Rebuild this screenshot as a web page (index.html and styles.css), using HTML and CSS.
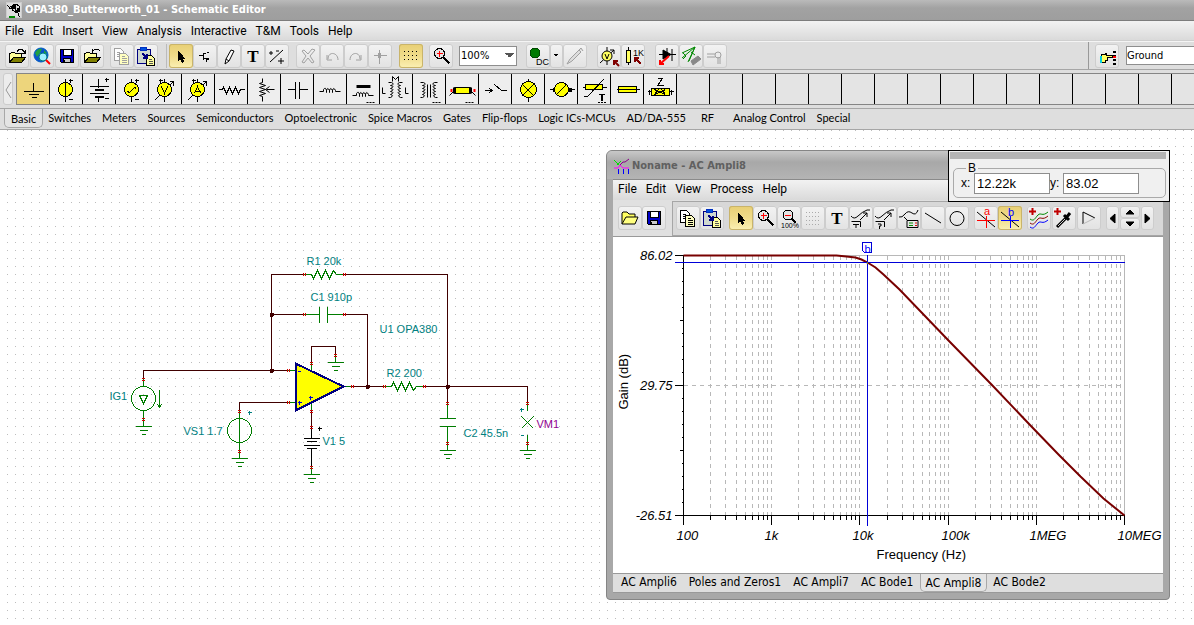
FILE: index.html
```html
<!DOCTYPE html>
<html lang="en">
<head>
<meta charset="utf-8">
<title>OPA380_Butterworth_01 - Schematic Editor</title>
<link rel="stylesheet" href="styles.css">
</head>
<body>
<svg class="defs" aria-hidden="true">
  <symbol id="folder" viewBox="-.5 -.5 24 24">
    <path d="M4 18V9h1l1-1h3l1 1h6v4" fill="#ffff99"/><path d="M4 18l4-5h12l-4 5z" fill="#808000"/>
  </symbol>
  <symbol id="floppy" viewBox="-.5 -.5 24 24">
    <path d="M5 5h13v13H6l-1-1z" fill="#0000c8"/><path d="M8 5h8v6H8z" fill="#fff"/><path d="M8 14h7v4H8z" fill="#ccc"/><path d="M9 15v2"/>
  </symbol>
  <symbol id="copy" viewBox="-.5 -.5 24 24">
    <path d="M4 4h6l3 3v9H4zM6 8h3M6 10h3M6 12h3" fill="#fff"/><path d="M9 9h6l3 3v8H9z" class="sheet"/><path d="M11 12h3M11 14h5M11 16h5M11 18h5"/>
  </symbol>
  <symbol id="paste" viewBox="-.5 -.5 24 24">
    <path d="M3 5h13v14H3z" fill="#cfd8cf" stroke="#000080"/><path d="M6 3h6v3H6z" fill="#0050e0" stroke="#0030c0"/><path d="M12 11h5l3 3v7h-8z" fill="#ffffa0"/><path d="M14 15h3M14 17h4M14 19h4" stroke="#555"/><path d="M8 9l4 4m0-4v4H8" stroke="#000080" stroke-width="2"/>
  </symbol>
  <symbol id="pointer" viewBox="-.5 -.5 24 24"><path d="M9 7v9l2-2 2 4 1-1-1-3h2z" fill="#000"/></symbol>
  <symbol id="zoomin" viewBox="-.5 -.5 24 24"><circle cx="10" cy="9" r="5" fill="#e4e4e4"/><path d="M14 13l6 6" stroke-width="2"/><path d="M7 9h6M10 6v6" stroke="#f00"/></symbol>
  <symbol id="gnd" viewBox="0 0 16 8" overflow="visible"><path d="M0 0h16M4 4h8M6 8h4"/></symbol>
  <symbol id="decade" viewBox="0 0 88 260" overflow="visible"><path d="M27 0v260M42 0v260M53 0v260M62 0v260M69 0v260M75 0v260M80 0v260M84 0v260M88 0v260"/></symbol>
  <symbol id="ticks" viewBox="0 0 88 10" overflow="visible"><path d="M27 0v4M42 0v4M53 0v4M62 0v4M69 0v4M75 0v4M80 0v4M84 0v4M88 0v9"/></symbol>
</svg>

<header class="titlebar">
  <svg class="icon appicon" viewBox="-.5 -.5 17 17" width="17" height="17"><path d="M0 0h15v15H0z" fill="#ddd" stroke="#ccc"/><path d="M1 3l3 3M2 6h3M6 2h5M4 4l6-2 3 2v5l-4 1-3-3zM6 4v4M9 3v6M12 10v3l2 2"/><path d="M6 3h3v3H7zM11 6h2v3h-3z" fill="#000"/><path d="M2 14h6" stroke="#080" stroke-width="2"/></svg>
  <h1>OPA380_Butterworth_01 - Schematic Editor</h1>
</header>
<nav class="menubar" aria-label="Main menu">
  <button>File</button><button>Edit</button><button>Insert</button><button>View</button><button>Analysis</button><button>Interactive</button><button>T&amp;M</button><button>Tools</button><button>Help</button>
</nav>

<div class="toolbar">
  <div class="group spaced">
    <button class="tool" aria-label="Open"><svg class="icon"><use href="#folder"/><path d="M12 7l2-2h3l3 3m0-3v4h-4" transform="translate(0 .5)"/></svg></button>
    <button class="tool" aria-label="Open from web"><svg class="icon smooth" viewBox="0 0 24 24"><circle cx="11" cy="11" r="7" fill="#0a50d0" stroke="#0060c0"/><path d="M5 9q3-5 7-4l-2 4-3 4zM14 6l3 3-3 2zM8 15l4-2 2 4z" fill="#20a040" stroke="none"/><circle cx="13" cy="13" r="4" fill="#a0f0ff" stroke="#008080"/><path d="M16 16l4 4" stroke="#f00" stroke-width="2"/></svg></button>
    <button class="tool" aria-label="Save"><svg class="icon"><use href="#floppy"/></svg></button>
    <button class="tool" aria-label="Close"><svg class="icon"><use href="#folder"/><path d="M12 5v4h4M12 8l3-3h3l2 2" /></svg></button>
  </div>
  <div class="group">
    <button class="tool" aria-label="Copy" disabled><svg class="icon"><use href="#copy"/></svg></button>
    <button class="tool" aria-label="Paste"><svg class="icon"><use href="#paste"/></svg></button>
  </div>
  <div class="group ruled">
    <button class="tool on" aria-label="Select"><svg class="icon"><use href="#pointer"/></svg></button>
    <button class="tool" aria-label="Last component"><svg class="icon" viewBox="-.5 -.5 24 24"><path d="M5 11h5M10 8v7M10 10l3-2M10 13l3 2v2M13 8h2" stroke-width="1"/><path d="M12 14h3" stroke-width="2"/></svg></button>
    <button class="tool" aria-label="Wire"><svg class="icon smooth" viewBox="0 0 24 24"><path d="M14 6l3 1-5 10-4 3 1-5zM9 15l3 2" fill="#fff"/></svg></button>
    <button class="tool" aria-label="Text"><svg class="icon" viewBox="0 0 24 24"><text x="12" y="18" class="serif-t">T</text></svg></button>
    <button class="tool" aria-label="Mirror"><svg class="icon smooth" viewBox="0 0 24 24"><path d="M5 18L18 6M4 9h4M6 7v4M13 17h6M16 14v6M11 7h3"/></svg></button>
  </div>
  <div class="group">
    <button class="tool" aria-label="Delete" disabled><svg class="icon smooth" viewBox="0 0 24 24"><path d="M8 6l4 4 4-5 3 1-5 6 4 6-2 1-4-5-4 5-2-1 4-6-4-5z"/></svg></button>
    <button class="tool" aria-label="Undo" disabled><svg class="icon smooth" viewBox="0 0 24 24"><path d="M7 11v5h5M8 15c0-8 10-7 10 1"/></svg></button>
    <button class="tool" aria-label="Redo" disabled><svg class="icon smooth" viewBox="0 0 24 24"><path d="M17 11v5h-5M16 15c0-8-10-7-10 1"/></svg></button>
    <button class="tool" aria-label="Hide wire" disabled><svg class="icon" viewBox="-.5 -.5 24 24"><path d="M11 5v14M5 11h13M10 9h2v4h-2z"/></svg></button>
  </div>
  <div class="group">
    <button class="tool on" aria-label="Grid"><svg class="icon" viewBox="-.5 -.5 24 24"><path d="M5 7h15M5 11h15M5 15h15" stroke-dasharray="1 3" transform="translate(-.5 0)"/></svg></button>
  </div>
  <div class="group">
    <button class="tool" aria-label="Zoom"><svg class="icon"><use href="#zoomin"/></svg></button>
  </div>
  <select class="zoom" aria-label="Zoom level"><option>100%</option></select>
  <div class="group">
    <button class="tool" aria-label="DC analysis"><svg class="icon" viewBox="0 0 24 24"><circle cx="9" cy="9" r="5" fill="#007a00" stroke="#004800"/><text x="10" y="21" class="mini">DC</text></svg></button>
    <button class="tool slim" aria-label="Analysis options"><svg class="icon" viewBox="-.5 -.5 13 24" width="13"><path d="M3 10h4M4 11h2"/></svg></button>
    <button class="tool" aria-label="Probe" disabled><svg class="icon smooth" viewBox="0 0 24 24"><path d="M4 20l3-5 9-9 2 2-9 9zM16 6l2-2 2 3" fill="#ddd"/></svg></button>
  </div>
  <div class="group">
    <button class="tool" aria-label="Voltmeter"><svg class="icon smooth" viewBox="0 0 24 24"><path d="M3 19L17 6m-4 0h4v4M10 3v18"/><circle cx="10" cy="12" r="5" fill="#ffff60"/><path d="M8 10l2 5 2-5"/><path d="M22 22l-5-5m0 4v-4h4" stroke="#800000" stroke-width="2"/></svg></button>
    <button class="tool" aria-label="Ohmmeter"><svg class="icon" viewBox="0 0 24 24"><path d="M7.500 3v18"/><path d="M5.500 6.500h4v12h-4z" fill="#ffff60"/><text x="12" y="12" class="mini">1K</text><path d="M20 20l-6-6m0 4v-4h4" stroke="#800000" stroke-width="2"/></svg></button>
  </div>
  <div class="group">
    <button class="tool" aria-label="Diode test"><svg class="icon smooth" viewBox="0 0 24 24"><path d="M4 10.500h17M17 5v12M12 4v10"/><path d="M8 6l8 4.500L8 15z" fill="#000"/><path d="M14 12L5 20m0-4v4h4" stroke="#f00" stroke-width="2"/></svg></button>
    <button class="tool" aria-label="PCB"><svg class="icon smooth" viewBox="0 0 24 24"><path d="M3 14L16 3 9 18M3 9l13-6-6 14M4 9l3 3-3 3M12 8l4 3" stroke="#080"/><path d="M12 17l7-5 3 3-8 6z" fill="#888" stroke="#888"/></svg></button>
    <button class="tool" aria-label="3D view" disabled><svg class="icon smooth" viewBox="0 0 24 24"><path d="M4 10h8M4 13h8M15 20v-7M17 20v-7"/><circle cx="15" cy="11" r="3"/></svg></button>
  </div>
  <div class="group dock">
    <button class="tool" aria-label="Find component"><svg class="icon" viewBox="-.5 -.5 24 24"><path d="M6 10h3l2-1v2h6v2h-5v3h-2v2H6z" fill="#ffff60"/><path d="M5 11v7" stroke="#00d0e0" stroke-width="2"/><path d="M19 6v14" stroke-width="3" stroke-dasharray="2 2"/><path d="M19 11v2" stroke="#f00" stroke-width="3"/></svg></button>
    <input class="finder" aria-label="Component name" value="Ground">
  </div>
</div>

<div class="parts">
  <button class="scroll" aria-label="Scroll left"><svg class="icon smooth" viewBox="0 0 10 30" width="10" height="30"><path d="M8 8l-5 8 5 8" stroke="#999"/></svg></button>
  <div class="strip">
    <button class="part on" aria-label="Ground"><svg class="icon" viewBox="-.5 -.5 33 31"><path d="M16 8v9M6 17h20M11 20h10M14 23h5" /></svg></button>
    <button class="part" aria-label="Battery"><svg class="icon" viewBox="-.5 -.5 33 31"><circle cx="15" cy="15" r="7" fill="#ff0"/><path d="M15 4v23M18 6h4M20 4v4M18 25h4"/></svg></button>
    <button class="part" aria-label="Cell"><svg class="icon" viewBox="-.5 -.5 33 31"><path d="M15 4v9M6 12h19M6 19h19M15 22v5M21 5h4M23 3v4M21 24h4"/><path d="M11 15.500h9M11 22.500h9" stroke-width="2"/></svg></button>
    <button class="part" aria-label="Generator"><svg class="icon" viewBox="-.5 -.5 33 31"><path d="M15 4v23M18 6h4M20 4v4M18 25h4"/><circle cx="15" cy="15" r="7" fill="#ff0"/><path d="M11 17l2 1 5-5 2 1"/></svg></button>
    <button class="part" aria-label="Voltmeter"><svg class="icon" viewBox="-.5 -.5 33 31"><path d="M5 26L24 7m-4 0h4v4M15 4v23M9 6h4M11 4v4"/><circle cx="15" cy="15" r="7" fill="#ff0"/><path d="M12 12l3 7 3-7"/></svg></button>
    <button class="part" aria-label="Ammeter"><svg class="icon" viewBox="-.5 -.5 33 31"><path d="M5 26L24 7m-4 0h4v4M15 4v23M9 6h4M11 4v4"/><circle cx="15" cy="15" r="7" fill="#ff0"/><path d="M12 19l3-7 3 7M13 17h5"/></svg></button>
    <button class="part" aria-label="Resistor"><svg class="icon" viewBox="-.5 -.5 33 31"><path d="M3 15h4l1-2 3 6 3-6 3 6 3-6 3 6 2-4h4"/></svg></button>
    <button class="part" aria-label="Potentiometer"><svg class="icon smooth" viewBox="-.5 -.5 33 31"><path d="M14 4v4l-3 1 6 2-6 2 6 2-6 2 6 2-6 2 3 1v5M18 15h8M21 12l-4 3 4 3"/></svg></button>
    <button class="part" aria-label="Capacitor"><svg class="icon" viewBox="-.5 -.5 33 31"><path d="M6 15h8M14 7v17M18 7v17M18 15h8"/></svg></button>
    <button class="part" aria-label="Inductor"><svg class="icon smooth" viewBox="-.5 -.5 33 31"><path d="M5 17h4v-2q2-3 3 1v2-2q1-4 3 0v2-2q1-4 3 0v2-2q1-4 3 0v1h5"/></svg></button>
    <button class="part" aria-label="Iron core inductor"><svg class="icon smooth" viewBox="-.5 -.5 33 31"><path d="M9 12h14" stroke-width="3"/><path d="M5 21h4v-2q2-3 3 1v2-2q1-4 3 0v2-2q1-4 3 0v2-2q1-4 3 0v1h5"/><path d="M19 28h8" stroke-dasharray="2 1"/></svg></button>
    <button class="part" aria-label="Coupled inductors"><svg class="icon smooth" viewBox="-.5 -.5 33 31"><path d="M12 7V2l3 3 3-3v5M8 8h3q4 2-1 3 5 1 0 3 5 1 0 3 5 1 0 3 4 1 0 3H8M22 8h-3q-4 2 1 3-5 1 0 3-5 1 0 3-5 1 0 3-4 1 0 3h2M2 13v6h3M25 13v6h3"/></svg></button>
    <button class="part" aria-label="Transformer"><svg class="icon smooth" viewBox="-.5 -.5 33 31"><path d="M7 8h3q4 2-1 3 5 1 0 3 5 1 0 3 5 1 0 3 4 1 0 3H7M24 8h-3q-4 2 1 3-5 1 0 3-5 1 0 3-5 1 0 3-4 1 0 3h2M14 10v13M17 10v13"/><path d="M19 28h8" stroke-dasharray="2 1"/></svg></button>
    <button class="part" aria-label="Indicator"><svg class="icon smooth" viewBox="-.5 -.5 33 31"><path d="M3 21l4-4h18l4 4" /><path d="M8 13h16v6H8z" fill="#ff0"/><path d="M8 13v6M24 13v6" stroke-width="3"/><path d="M4 16h2M27 16h2" stroke="#f00" stroke-width="3"/><path d="M19 28h8" stroke-dasharray="2 1"/></svg></button>
    <button class="part" aria-label="Switch"><svg class="icon" viewBox="-.5 -.5 33 31"><path d="M5 16h7M10 14l3 2-3 2M15 10l7 6h5"/></svg></button>
    <button class="part" aria-label="Lamp"><svg class="icon" viewBox="-.5 -.5 33 31"><path d="M16 4v23"/><circle cx="16" cy="15" r="8" fill="#ff0"/><path d="M10 10l11 11M21 10L10 21"/></svg></button>
    <button class="part" aria-label="Motor"><svg class="icon" viewBox="-.5 -.5 33 31"><path d="M4 15h25"/><path d="M7 15h19" stroke-width="4"/><circle cx="16" cy="15" r="7" fill="#ff0"/><path d="M11 20L21 10"/></svg></button>
    <button class="part" aria-label="Thermistor"><svg class="icon" viewBox="-.5 -.5 33 31"><path d="M4 13h24"/><path d="M7 10h17v5H7z" fill="#ff0"/><path d="M5 22h4L25 5M20 20h6"/><path d="M23 20v6" stroke-width="2"/><path d="M19 28h8" stroke-dasharray="2 1"/></svg></button>
    <button class="part" aria-label="Fuse"><svg class="icon" viewBox="-.5 -.5 33 31"><path d="M7 12h18v6H7z" fill="#ff0"/><path d="M5 15h23"/></svg></button>
    <button class="part" aria-label="Impedance"><svg class="icon" viewBox="-.5 -.5 33 31"><path d="M13 4h5l-5 7h6M3 17h26M5 15v5M27 15v5"/><path d="M7 14h18v7H7z" fill="#ff0"/><path d="M10 15l11 5M21 15l-11 5M14 15l-4 5M17 15l4 5"/></svg></button>
  </div>
</div>

<nav class="tabs" aria-label="Component groups">
  <button class="tab on">Basic</button><button class="tab">Switches</button><button class="tab">Meters</button><button class="tab">Sources</button><button class="tab">Semiconductors</button><button class="tab">Optoelectronic</button><button class="tab">Spice Macros</button><button class="tab">Gates</button><button class="tab">Flip-flops</button><button class="tab">Logic ICs-MCUs</button><button class="tab">AD/DA-555</button><button class="tab wide">RF</button><button class="tab">Analog Control</button><button class="tab">Special</button>
</nav>

<main class="canvas">
  <svg class="schematic" width="100%" height="100%">
    <pattern id="dots" x="7" y="0" width="8" height="8" patternUnits="userSpaceOnUse"><rect width="1" height="1" fill="#bdbdbd"/></pattern>
    <rect width="100%" height="100%" fill="url(#dots)"/>
    <g transform="translate(.5 -129.5)">
      <g class="wire">
        <path d="M303 274H271V370M343 274H447V402M271 314H303M343 314H367V386M143 378V370H287M239 410V402H287M311 362V346H335V354M351 386H383M423 386H527V402M311 410V426"/>
        <path d="M269 314h4M271 312v4M269 370h4M271 368v4M365 386h4M367 384v4M445 386h4M447 384v4" class="node"/>
      </g>
      <g class="part-line">
        <path d="M303 274h8l2 4 4-8 4 8 4-8 4 8 4-8 3 4h7M303 314h16M319 306v16M327 306v16M327 314h16M287 370h8M287 402h8M311 362v8M335 354v8M343 386h8M311 402v8M383 386h8l2-4 4 8 4-8 4 8 4-8 4 8 3-4h7"/>
        <path d="M447 402v16M439 418h16M439 426h16M447 426v24M527 402v8M527 434v16M521 416l12 12M533 416l-12 12M143 378v8M143 410v16M239 410v48M311 466v8M159 389v18M157 404l2 3 2-3M139 395h8l-4 8z"/>
        <circle cx="143" cy="398" r="12"/><circle cx="239" cy="430" r="12"/>
        <use href="#gnd" x="327" y="362" width="16" height="8"/><use href="#gnd" x="439" y="450" width="16" height="8"/><use href="#gnd" x="519" y="450" width="16" height="8"/><use href="#gnd" x="135" y="426" width="16" height="8"/><use href="#gnd" x="231" y="458" width="16" height="8"/><use href="#gnd" x="303" y="474" width="16" height="8"/>
      </g>
      <path class="cell" d="M311 426v12M303 438h16M306 441h10M303 445h16M306 448h10M311 448v18M317 428h4M319 426v4"/>
      <path class="opamp" d="M295 363v47l48-24z"/>
      <path class="sign" d="M297 371h3M297 402h4M299 400v4M308 397h4M310 395v4"/>
      <path class="pin" d="M302 274h3M342 274h3M302 314h3M342 314h3M286 370h3M286 402h3M350 386h3M382 386h3M422 386h3M311 361v3M335 353v3M311 409v3M311 425v3M311 465v3M143 377v3M143 417v3M239 409v3M239 449v3M447 401v3M447 441v3M527 401v3M527 441v3"/>
      <path class="polarity" d="M247 412h4M249 410v4M519 409h4M521 407v4M520 435h3"/>
      <g class="label">
        <text x="306" y="264">R1 20k</text><text x="310" y="300">C1 910p</text><text x="379" y="332">U1 OPA380</text><text x="386" y="376">R2 200</text><text x="109" y="399">IG1</text><text x="183" y="434">VS1 1.7</text><text x="322" y="444">V1 5</text><text x="463" y="436">C2 45.5n</text><text x="536" y="427" class="meter">VM1</text>
      </g>
    </g>
  </svg>

  <section class="window" aria-label="Noname - AC Ampli8">
    <header class="win-title">
      <svg class="icon smooth" viewBox="0 0 17 17" width="17" height="17"><path d="M1 2l5 5M4 7l4-4" stroke="#0d0"/><path d="M7 7l3-3h2l4-3" stroke="#808"/><path d="M1 10h4l2-3 3 3h6" stroke="#f0f"/><path d="M5.500 11v5M10.500 11v5M15.500 11v5" stroke="#00f"/></svg>
      <h2>Noname - AC Ampli8</h2>
    </header>
    <nav class="menubar inner" aria-label="Diagram menu"><button>File</button><button>Edit</button><button>View</button><button>Process</button><button>Help</button></nav>
    <div class="win-tools">
      <div class="group">
        <button class="tool" aria-label="Open diagram"><svg class="icon smooth" viewBox="0 0 24 24"><path d="M4 18V7l1-1h4l2 2h6v3" fill="#ffff60"/><path d="M4 18l4-7h12l-3 7z" fill="#ffff80"/></svg></button>
        <button class="tool" aria-label="Save diagram"><svg class="icon"><use href="#floppy"/></svg></button>
      </div>
      <div class="panel">
        <div class="group">
          <button class="tool" aria-label="Copy curve"><svg class="icon"><use href="#copy"/></svg></button>
          <button class="tool" aria-label="Paste curve"><svg class="icon"><use href="#paste"/></svg></button>
        </div>
        <div class="group">
          <button class="tool on" aria-label="Pointer"><svg class="icon"><use href="#pointer"/></svg></button>
          <button class="tool" aria-label="Zoom in"><svg class="icon"><use href="#zoomin"/></svg></button>
          <button class="tool" aria-label="Normal view"><svg class="icon" viewBox="0 0 24 24"><circle cx="11" cy="9" r="5" fill="#e4e4e4"/><path d="M15 13l4 4" stroke-width="2"/><path d="M8 9.500h6" stroke="#f00"/><text x="4" y="22" class="micro">100%</text></svg></button>
          <button class="tool" aria-label="Plot grid"><svg class="icon" viewBox="-.5 -.5 24 24"><path d="M5 6h15M5 10h15M5 14h15M5 18h15" stroke="#aaa" stroke-dasharray="1 2" transform="translate(-.5 0)"/></svg></button>
          <button class="tool" aria-label="Add text"><svg class="icon" viewBox="0 0 24 24"><text x="12" y="18" class="serif-t">T</text></svg></button>
          <button class="tool" aria-label="Curve label"><svg class="icon smooth" viewBox="0 0 24 24"><path d="M2 10q3 4 7 0t9-6h3M11 14l7-7m-4 0h4v4M2.500 15.500h9V21M4 18.500h6M7 18v4"/></svg></button>
          <button class="tool" aria-label="Curve query"><svg class="icon smooth" viewBox="0 0 24 24"><path d="M2 10q3 4 7 0t9-6h3M11 14l7-7m-4 0h4v4M2.500 15.500h9V21M5 18h3v2H6.500v3"/></svg></button>
          <button class="tool" aria-label="Legend"><svg class="icon smooth" viewBox="0 0 24 24"><path d="M2 11q3 1 6-3t7-1 6-3M7 11l3 3M10 14.500h11v7H10z"/><path d="M12 17h4M12 19.500h4" stroke="#080"/><path d="M18 17h2M18 19.500h2" stroke="#d00"/></svg></button>
          <button class="tool" aria-label="Line"><svg class="icon smooth" viewBox="0 0 24 24"><path d="M4 7l16 10"/></svg></button>
          <button class="tool" aria-label="Ellipse"><svg class="icon smooth" viewBox="0 0 24 24"><circle cx="12" cy="12.500" r="7"/></svg></button>
        </div>
        <div class="group">
          <button class="tool" aria-label="Cursor a"><svg class="icon smooth" viewBox="0 0 24 24"><path d="M3 6l18 15"/><path d="M3 14.500h18M12.500 10v12" stroke="#f00"/><text x="10" y="9" class="cur-a">a</text></svg></button>
          <button class="tool on" aria-label="Cursor b"><svg class="icon smooth" viewBox="0 0 24 24"><path d="M3 6l18 15"/><path d="M3 14.500h18M12.500 10v12" stroke="#00f"/><text x="10" y="10" class="cur-b">b</text></svg></button>
        </div>
        <div class="group spaced">
          <button class="tool" aria-label="Add curves"><svg class="icon smooth" viewBox="0 0 24 24"><path d="M2 5.500h7M5.500 2v7" stroke="#c00000" stroke-width="2"/><path d="M3 13c4 3 5-1 8-4s4 2 10-3" stroke="#080"/><path d="M3 17c4 3 5-1 8-4s4 2 10-3" stroke="#800"/><path d="M3 21c4 3 5-1 8-4s4 2 10-3" stroke="#00f"/></svg></button>
          <button class="tool" aria-label="Pick color"><svg class="icon smooth" viewBox="0 0 24 24"><path d="M2 5.500h7M5.500 2v7" stroke="#c00000" stroke-width="2"/><path d="M5 21l9-9" stroke-width="3"/><path d="M6 20l7-7" stroke="#ccc"/><path d="M12 9l5 5M14 12l4-5" stroke-width="3"/></svg></button>
          <button class="tool" aria-label="Marker"><svg class="icon smooth" viewBox="0 0 24 24"><path d="M6 18V6l12 6" /><path d="M18 12L6 18" stroke="#bbb"/></svg></button>
        </div>
        <div class="group mover">
          <button class="tool slim" aria-label="Left"><svg class="icon smooth" viewBox="0 0 13 24" width="13"><path d="M9 8v9l-5-4.500z" fill="#000"/></svg></button>
          <div class="stack">
            <button class="tool half" aria-label="Up"><svg class="icon smooth" viewBox="0 0 20 12" width="20" height="12"><path d="M6 8h8l-4-4z" fill="#000"/></svg></button>
            <button class="tool half" aria-label="Down"><svg class="icon smooth" viewBox="0 0 20 12" width="20" height="12"><path d="M6 4h8l-4 4z" fill="#000"/></svg></button>
          </div>
          <button class="tool slim" aria-label="Right"><svg class="icon smooth" viewBox="0 0 13 24" width="13"><path d="M4 8v9l5-4.500z" fill="#000"/></svg></button>
        </div>
      </div>
    </div>
    <div class="plot">
      <svg width="550" height="336" viewBox="612.5 236.5 550 336">
        <g class="grid">
          <g stroke-dasharray="4 4"><use href="#decade" x="683" y="255" width="88" height="260"/><use href="#decade" x="771" y="255" width="88" height="260"/><use href="#decade" x="860" y="255" width="88" height="260"/><use href="#decade" x="948" y="255" width="88" height="260"/><use href="#decade" x="1036" y="255" width="88" height="260"/><path d="M683 385H1124"/></g>
          <path d="M683 255H1124V515"/>
        </g>
        <g class="axis">
          <path d="M674 255h9v260M674 385h9M674 515H1124M683 515v9M679 320h4M679 450h4"/>
          <path d="M681 268h2M681 281h2M681 294h2M681 307h2M681 333h2M681 346h2M681 359h2M681 372h2M681 398h2M681 411h2M681 424h2M681 437h2M681 463h2M681 476h2M681 489h2M681 502h2"/>
          <use href="#ticks" x="683" y="515" width="88" height="10"/><use href="#ticks" x="771" y="515" width="88" height="10"/><use href="#ticks" x="860" y="515" width="88" height="10"/><use href="#ticks" x="948" y="515" width="88" height="10"/><use href="#ticks" x="1036" y="515" width="88" height="10"/>
        </g>
        <path class="curve" d="M683 255H836L846 256 855 257 861 259 867 262 875 267 883 274 899 289 948 340 991 384 1030 425 1058 454 1080 476 1103 498 1124 515"/>
        <path class="cursor" d="M674 262H1124M867 254V525M862 242h9v10h-7l-2-2z"/>
        <path d="M867 261v2" stroke="#8a8a00"/>
        <text x="864" y="252" class="cursor-name">b</text>
        <g class="values">
          <text x="672" y="259" class="end">86.02</text><text x="672" y="389" class="end">29.75</text><text x="672" y="519" class="end">-26.51</text>
          <text x="676" y="539">100</text><text x="764" y="539">1k</text><text x="852" y="539">10k</text><text x="941" y="539">100k</text><text x="1029" y="539">1MEG</text><text x="1117" y="539">10MEG</text>
        </g>
        <g class="caption"><text x="876" y="558">Frequency (Hz)</text><text transform="translate(627 409) rotate(-90)">Gain (dB)</text></g>
      </svg>
    </div>
    <nav class="tabs low" aria-label="Diagrams"><button class="tab">AC Ampli6</button><button class="tab">Poles and Zeros1</button><button class="tab">AC Ampli7</button><button class="tab">AC Bode1</button><button class="tab on">AC Ampli8</button><button class="tab">AC Bode2</button></nav>
  </section>

  <aside class="readout" aria-label="Cursor position">
    <div class="grip"></div>
    <fieldset>
      <legend>B</legend>
      <label for="bx">x:</label><input id="bx" value="12.22k">
      <label for="by">y:</label><input id="by" value="83.02">
    </fieldset>
  </aside>
</main>
</body>
</html>
```
FILE: styles.css
```css
* { box-sizing: border-box; }
html, body { height: 100%; }
body {
  margin: 0; display: flex; flex-direction: column; overflow: hidden;
  background: #fff; color: #000;
  font: 12px/16px "DejaVu Sans Condensed", "DejaVu Sans", sans-serif;
}
button, input, select { font: inherit; color: inherit; margin: 0; padding: 0; border: 0; border-radius: 0; }
button { background: none; white-space: nowrap; }
h1, h2 { margin: 0; font: bold 11px/16px "DejaVu Sans Condensed", sans-serif; }
svg { display: block; flex: none; }
.defs { position: absolute; width: 0; height: 0; }
.icon { fill: none; stroke: #000; stroke-width: 1; shape-rendering: crispEdges; overflow: visible; }
.smooth { shape-rendering: auto; }
.icon text { fill: #000; stroke: none; }
.serif-t { font: bold 17px "Liberation Serif", serif; text-anchor: middle; }
.mini { font: 9px "Liberation Sans", sans-serif; }
.micro { font: 7px "Liberation Sans", sans-serif; }
.icon .cur-a { font: 11px "Liberation Sans", sans-serif; fill: #f00; }
.icon .cur-b { font: 11px "Liberation Sans", sans-serif; fill: #00f; }
.sheet { fill: #ffffc0; }

.titlebar {
  flex: none; height: 21px; display: flex; align-items: center; gap: 2px; padding-left: 6px;
  background: linear-gradient(#bababa, #a2a2a2 40%, #9e9e9e); border-bottom: 1px solid #7c7c7c;
}
.titlebar h1 { color: #fff; }
.menubar {
  flex: none; height: 20px; display: flex; gap: 9px; padding-left: 5px;
  background: linear-gradient(#f2f2f2, #dadada); border-bottom: 1px solid #cfcfcf;
  font: 12px/20px Roboto, "Open Sans", sans-serif;
}
.toolbar {
  flex: none; height: 29px; display: flex; align-items: center; padding-left: 5px; gap: 6px;
  background: #dedede; border-top: 1px solid #f4f4f4; border-bottom: 1px solid #a6a6a6;
}
.group { display: flex; }
.spaced { gap: 1px; }
.ruled { border-left: 1px solid #bbb; margin-left: 2px; padding-left: 2px; }
.ruled + .group { margin: 0 1px; }
.tool {
  width: 24px; height: 24px; border-radius: 3px; display: block;
  background: linear-gradient(#f3f3f3, #e2e2e2); box-shadow: inset 0 0 0 1px #cdcdcd;
}
.tool svg { height: 24px; }
.tool svg:not([width]) { width: 24px; }
.tool:disabled .icon { stroke: #a0a0a0; }
.tool:disabled .sheet { fill: #eee; }
.tool.slim { width: 13px; }
.tool.half { width: 20px; height: 12px; }
.tool.half svg { height: 12px; }
.tool.on { background: linear-gradient(#e8cf74, #f0dc8a 50%, #fbf0b4); box-shadow: inset 0 0 0 1px #c9b46a; }
.zoom {
  appearance: none; width: 58px; height: 20px; padding-left: 1px; border: 1px solid #8e8e8e; margin: 0 3px 0 0;
  font: 11px/16px "DejaVu Sans Condensed", sans-serif;
  background: linear-gradient(to bottom right, #555 50%, transparent 50%) 50px 6px / 5px 5px no-repeat,
    linear-gradient(to bottom left, #555 50%, transparent 50%) 45px 6px / 5px 5px no-repeat, #fff;
}
.zoom + .group, .zoom + .group + .group { margin-right: 4px; }
.dock { margin-left: auto; align-self: stretch; align-items: center; gap: 7px; border-left: 1px solid #999; padding-left: 6px; }
.finder { width: 68px; height: 19px; border: 1px solid #8e8e8e; border-right: 0; background: #fff; font: 11px/16px "DejaVu Sans Condensed", sans-serif; }

.parts { flex: none; height: 39px; display: flex; padding-top: 3px; background: #dedede; border-bottom: 1px solid #a6a6a6; }
.scroll { width: 10px; height: 32px; margin: 0 3px; border: 1px solid #ccc; border-radius: 3px; background: #ececec; }
.scroll svg { margin-left: -1px; }
.strip {
  flex: 1; height: 32px; display: flex; overflow: hidden; border: solid #858585; border-width: 1px 0 1px 1px;
  background: repeating-linear-gradient(to right, transparent 0 32px, #000 32px 33px) #e4e4e4;
}
.part { flex: none; width: 32px; height: 30px; margin-right: 1px; background: #eee; }
.part svg { width: 33px; height: 31px; }
.part.on { background: #edd57c; }

.tabs {
  flex: none; height: 21px; display: flex; padding-left: 4px; background: #dedede; border-bottom: 1px solid #a6a6a6;
  font: 11px/17px Lato, "Open Sans", sans-serif;
}
.tab { height: 17px; padding: 0 6px 0 5px; }
.tab.wide { padding: 0 14px 0 9px; }
.tab.on { height: 19px; padding: 0 6px; border: 1px solid #a8a8a8; border-top: 0; border-radius: 0 0 5px 5px; background: #e4e4e4; }

.canvas { flex: 1; min-height: 0; position: relative; background: #fff; }
.schematic { fill: none; shape-rendering: crispEdges; }
.wire { stroke: #400000; }
.node { stroke-width: 3; }
.part-line { stroke: #007c00; }
.cell { stroke: #000; }
.opamp { fill: #ff0; stroke: #000080; stroke-width: 2; }
.sign { stroke: #0000d0; }
.pin { stroke: #d00000; stroke-width: 3; stroke-dasharray: 1 1; }
.polarity { stroke: #008080; }
.label { font: 11px "Liberation Sans", sans-serif; fill: #008080; }
.meter { fill: #900090; }

.window {
  position: absolute; left: 606px; top: 20px; width: 564px; display: flex; flex-direction: column;
  padding: 0 6px 6px; background: #a8a8a8; border: 1px solid #858585; border-radius: 6px 6px 4px 4px;
}
.win-title { height: 28px; display: flex; align-items: center; gap: 2px; margin: 0 -6px; padding: 2px 0 0 6px; background: linear-gradient(#c8c8c8, #a8a8a8 40%, #b4b4b4); border-radius: 5px 5px 0 0; }
.win-title h2 { color: #606060; }
.menubar.inner { height: 21px; border: 0; border-top: 1px solid #8a8a8a; line-height: 18px; padding-bottom: 2px; }
.win-tools { height: 37px; display: flex; align-items: center; background: #e0e0e0; padding-left: 5px; border-bottom: 1px solid #999; gap: 6px; }
.panel { flex: 1; height: 35px; display: flex; align-items: center; gap: 5px; padding-left: 3px; background: #d8d8d8; border: 1px solid #a6a6a6; border-right: 0; }
.mover { align-items: center; }
.stack { display: flex; flex-direction: column; margin: 0 1px; }
.plot { background: #fff; }
.plot svg { max-width: 100%; fill: none; shape-rendering: crispEdges; }
.grid { stroke: #b8b8b8; }
.axis { stroke: #000; }
.curve { stroke: #780000; stroke-width: 2; shape-rendering: auto; }
.cursor { stroke: #0000d8; }
.cursor-name { font: 11px "Liberation Sans", sans-serif; fill: #00f; }
.values { font: italic 13px "Liberation Sans", sans-serif; fill: #000; }
.end { text-anchor: end; }
.caption { font: 13px "Liberation Sans", sans-serif; fill: #000; }
.tabs.low {
  height: 20px; padding-left: 2px; border: solid #999; border-width: 1px 0;
  font: 12px/16px "DejaVu Sans Condensed", sans-serif;
}
.low .tab { height: 16px; padding: 0 6px; }
.low .tab.on { height: 18px; padding: 0 5px; }

.readout { position: absolute; left: 948px; top: 20px; width: 222px; height: 52px; padding: 1px 3px 3px 1px; background: #f0f0f0; border: 1px solid #000; }
.grip { height: 7px; background: #b4b4b4; }
.readout fieldset {
  display: flex; align-items: center; height: 36px; margin: 3px 0 0 3px; padding: 0 0 5px 7px; min-width: 0;
  border: 1px solid #aaa; border-radius: 5px; font: 12px/12px "Liberation Sans", sans-serif;
}
.readout legend { margin-left: 5px; padding: 0 2px; }
.readout label { width: 13px; }
.readout input { width: 76px; height: 21px; padding-left: 2px; border: 1px solid #8e8e8e; background: #fff; font: 13px/16px "Liberation Sans", sans-serif; }
```
